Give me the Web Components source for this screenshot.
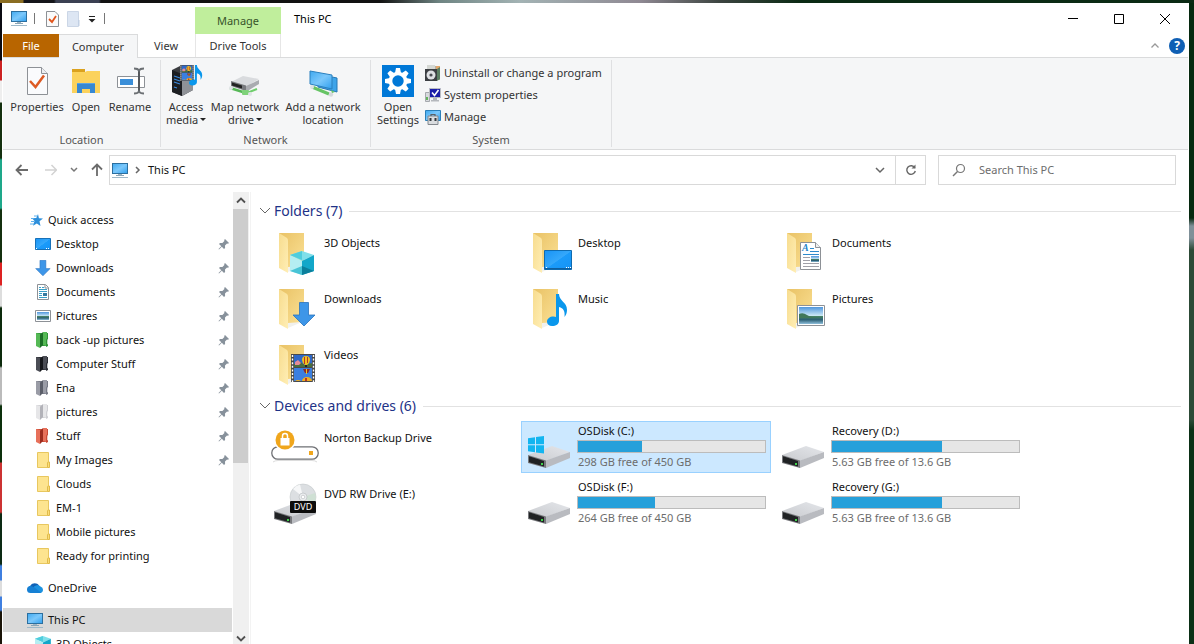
<!DOCTYPE html>
<html lang="en">
<head>
<meta charset="utf-8">
<title>This PC</title>
<style>
  html, body { height: 100%; }
  body {
    margin: 0;
    overflow: hidden;
    font: 11px/16px "Noto Sans", "Open Sans", sans-serif;
    color: #111;
  }
</style>
</head>
<body>
<pc-desktop>
  <explorer-window></explorer-window>
</pc-desktop>

<script>
/* ---------- icon drawings ---------- */
const GRADS = `
  <defs>
    <linearGradient id="scr" x1="0" y1="0" x2="1" y2="1"><stop offset="0" stop-color="#3fa9f0"/><stop offset=".5" stop-color="#7cc8fb"/><stop offset="1" stop-color="#2f9fee"/></linearGradient>
    <linearGradient id="desk" x1="0" y1="0" x2="1" y2="1"><stop offset="0" stop-color="#1793f5"/><stop offset=".5" stop-color="#35a8fb"/><stop offset=".52" stop-color="#1b9bfa"/><stop offset="1" stop-color="#1593f5"/></linearGradient>
    <linearGradient id="fb" x1="0" y1="0" x2="1" y2="1"><stop offset="0" stop-color="#e9c265"/><stop offset="1" stop-color="#fbe196"/></linearGradient>
    <linearGradient id="ff" x1="0" y1="0" x2="1" y2="1"><stop offset="0" stop-color="#f7dc8e"/><stop offset="1" stop-color="#ffeeb5"/></linearGradient>
    <linearGradient id="dt" x1="0" y1="1" x2="1" y2="0"><stop offset="0" stop-color="#c9cbcf"/><stop offset="1" stop-color="#e4e6ea"/></linearGradient>
    <linearGradient id="sky" x1="0" y1="0" x2="0" y2="1"><stop offset="0" stop-color="#4f96dd"/><stop offset=".5" stop-color="#c9e6f4"/><stop offset=".51" stop-color="#4d8a62"/><stop offset=".75" stop-color="#2c5f74"/><stop offset="1" stop-color="#8fc0dc"/></linearGradient>
    <linearGradient id="od" x1="0" y1="0" x2="1" y2="1"><stop offset="0" stop-color="#0f6cc4"/><stop offset="1" stop-color="#0f4f9e"/></linearGradient>
  </defs>`;

const monitor = `
  <rect x=".5" y=".5" width="15" height="10" fill="url(#scr)" stroke="#2c6f9f"/>
  <path d="M6 11h4v1.500H6z" fill="#9fb4c2"/><path d="M4 12h8v1H4z" fill="#8aa5b6"/>
  <path d="M0 14h16v1H0z" fill="#9fb9c9"/>`;

const arrowDown = (x, y, s) => `
  <path transform="translate(${x} ${y}) scale(${s})" d="M7.500.5h9v12.500h6.500L12 24 1 13h6.500z" fill="#3d96e8" stroke="#2b73bd" stroke-width=".8"/>`;

const cube = `
  <path d="M12 0l12 4-12 6L0 4z" fill="#7fdfea"/>
  <path d="M0 4l12 6v14L0 20z" fill="#b5eef2"/><path d="M24 4l-12 6v14l12-4z" fill="#12a7c9"/>
  <path d="M0 20l12-5v9z" fill="#48c4d6"/><path d="M24 20l-12-5v9z" fill="#0b7f9b"/>
  <path d="M12 0L0 4l12 5z" fill="#4fcddd"/>`;

const film = `
  <path d="M0 0h24v28H0z" fill="#4a4a4a"/>
  <path d="M3 1h18v12H3z" fill="#2f68c8"/><path d="M3 14h18v13H3z" fill="#3b7fe0"/>
  <path d="M3 10l6-2 5 3 7-2v4H3z" fill="#4a6e3c"/><path d="M4 8l3-2 3 3-2 2H4z" fill="#e58b98"/>
  <path d="M11 6a4 4 0 0 1 8 0q0 3-3 5h-2q-3-2-3-5z" fill="#efc21e"/>
  <path d="M13 3h1v7h-1zM16 3h1v6h-1z" fill="#b83428"/><path d="M14 11h2v2h-2z" fill="#222"/>
  <path d="M12 15h7l-2 4h-3z" fill="#8c2a28"/><path d="M15 15h1v5h-1z" fill="#efc21e"/>
  <path d="M11 27a5 4 0 0 1 10 0zM4 27a4 3 0 0 1 6 0z" fill="#efae22"/><path d="M14 24h2v3h-2z" fill="#b83428"/>
  <path d="M1.500 1v27M22.500 1v27" stroke="#fff" stroke-width="1.400" stroke-dasharray="2 1.600"/>`;

const note = `
  <path d="M12 0c0 7 8 8 8 16 0 3-1 5-2.500 7 .6-6-1-9-5.500-10v14c0 3-3 5-7 5-3 0-5-1.500-5-4.200C0 24.500 3 22.500 6.500 22.500c1 0 2 .2 2.500.5V0z" fill="#0a97ec"/>`;

const driveBody = `
  <path d="M3 32L27 23l18 6-24 9z" fill="url(#dt)"/>
  <path d="M21 37.500L45 29v6L21 45z" fill="#b9bbc0"/>
  <path d="M3 32l18 5.500V45L3 40z" fill="#77787c"/>
  <path d="M4 33.300l15 4.700v5.500L4 39.300z" fill="#202224"/>
  <path d="M16 40h2v2h-2z" fill="#3fd34a"/>`;

const folder48 = inner => `
  <path d="M8 5h25v33l-16 2z" fill="url(#fb)"/>
  <path d="M8 5l8 5q1 1 1 3v32L8 40z" fill="url(#ff)"/><path d="M17 39l14-1-14 6z" fill="#f1f1ee"/>
  ${inner}`;

const colourFolder = (a, b, c) => `
  <path d="M1 1h12v13H1z" fill="${b}"/>
  <path d="M1 1l4 1v14l-4-2z" fill="${a}"/>
  <path d="M5 3l3-3v13l-3 3z" fill="${c}"/><path d="M8 0h4v14l-4-1z" fill="${a}"/>
  <path d="M11 15V9q0-3 2-3v8z" fill="${b}"/><path d="M12 12V8.500q0-1.500 1-1.500v5.500z" fill="#fff" opacity=".7"/>`;

const plainFolder = `
  <path d="M2.500.5h11v15h-11z" fill="#fde48f" stroke="#e8c75f"/>
  <path d="M12.500 15V11q0-1 1-1h1v5.500h-2" fill="#fbdc78" stroke="#e0bb4b"/>`;

const ICONS = {
  pc: [16, 15, monitor],
  props: [24, 32, `<path d="M2.500 2.500h14l6 6v21h-20z" fill="#fafbfd" stroke="#8d9196"/><path d="M16.500 2.500v6h6" fill="#eceef1" stroke="#8d9196"/><path d="M5 16l5.500 6L19 10.500" fill="none" stroke="#dd5a23" stroke-width="2.500"/>`],
  propsSmall: [13, 16, `<path d="M.5.5h8.500l3.500 3.500v11.500H.5z" fill="#fafafa" stroke="#8d9196"/><path d="M3 8l3 3 4-6" fill="none" stroke="#e2541b" stroke-width="1.800"/>`],
  newFolder: [13, 16, `<path d="M.5.5h11v15H.5z" fill="#dde6f3" stroke="#cbd6e6"/><path d="M11 9h1.500v6H11z" fill="#c2d0e4"/>`],
  qat: [8, 8, `<path d="M1 1.500h6" stroke="#222"/><path d="M.5 4h7L4 7.500z" fill="#222"/>`],
  min: [10, 10, `<path d="M0 4.500h10" stroke="#000"/>`],
  max: [10, 10, `<path d="M.5.5h9v9h-9z" fill="none" stroke="#000"/>`],
  close: [10, 10, `<path d="M0 0l10 10M10 0L0 10" stroke="#000"/>`],
  caretUp: [8, 5, `<path d="M.5 4.500L4 1l3.500 3.500" fill="none" stroke="#999" stroke-width="1.300"/>`],
  open: [32, 32, `<path d="M2 4h13v6H2z" fill="#dba21f"/><path d="M2 7h13l2-1h13v22H2z" fill="#fbd25c"/><path d="M7 28V18h18v10h-5v-4h-8v4z" fill="#3788d2"/><path d="M7 18h18v1H7z" fill="#5ba4e4"/>`],
  rename: [32, 32, `<path d="M3.500 11.500h27v11h-27z" fill="#fff" stroke="#8d9196"/><path d="M6 14h13v6H6z" fill="#3b8fd9"/><path d="M25 4v24" stroke="#55585c" stroke-width="2"/><path d="M20 3.500q4 0 5 2 1-2 5-2M20 28.500q4 0 5-2 1 2 5 2" fill="none" stroke="#6c7074" stroke-width="1.800"/>`],
  media: [34, 32, `<path d="M3 5l8-4 13 4v20l-11 6-10-4z" fill="#3a3c40"/><path d="M13 9l11-4v20l-11 6z" fill="#8f9297"/><path d="M3 5l10 4v22L3 27z" fill="#1d1f23"/>
    <path d="M5 11l6 2M5 14l6 2M5 17l6 2M5 22l3 1" stroke="#3c8be0" stroke-width="1.200"/><g transform="translate(11 0) scale(.58 .56)">${film}</g><g transform="translate(20 0) scale(.66 .64)">${note}</g>`],
  mapDrive: [32, 32, `<path d="M2 17L14 11l16 3-13 8z" fill="#d9dbde"/><path d="M17 21l13-6v4l-13 8z" fill="#a9abb0"/><path d="M2 16l15 4.500V26L2 21z" fill="#77797d"/><path d="M3 17.500l10 3v3l-10-3z" fill="#222"/>
    <path d="M1 23l16 5" stroke="#57b857" stroke-width="2.500"/><path d="M14 27l4 1 10-4" fill="none" stroke="#6fce6c" stroke-width="2"/><rect x="13" y="25" width="7" height="5" rx="1" fill="#7fd27a"/><circle cx="2" cy="23" r="2" fill="#dfe3e6"/><circle cx="21" cy="29" r="2" fill="#e1e4e7"/>`],
  addLoc: [34, 32, `<path d="M12 9l19 4v14l-19-5z" fill="#3ea4e9" stroke="#2779b5"/><path d="M4 6l22 4v14L4 19z" fill="url(#scr)" stroke="#2b80be"/><path d="M6 22l17 7" stroke="#66c465" stroke-width="3"/><circle cx="6" cy="22" r="2" fill="#dfe3e6"/><circle cx="25" cy="29.500" r="2.200" fill="#d5d9dc"/><path d="M25 25l4 2-3 1z" fill="#66c465"/>`],
  gear: [32, 32, `<path d="M0 0h32v32H0z" fill="#0078d7"/><g fill="#fff"><path d="M14 3h4l1 5h-6zM14 29h4l1-5h-6zM3 14v4l5 1v-6zM29 14v4l-5 1v-6z"/><g transform="rotate(45 16 16)"><path d="M14 3h4l1 5h-6zM14 29h4l1-5h-6zM3 14v4l5 1v-6zM29 14v4l-5 1v-6z"/></g></g><circle cx="16" cy="16" r="7.500" fill="none" stroke="#fff" stroke-width="3.600"/>`],
  uninstall: [16, 16, `<path d="M2 1h13v14H2z" fill="#b5b0a2"/><path d="M11 1h4v13h-4z" fill="#e2a76c"/><path d="M2 0h8v4H2z" fill="#d5d8d4"/><path d="M0 4h12v12H0z" fill="#3c3f43"/><circle cx="6" cy="10" r="4.500" fill="#dfe1e4"/><circle cx="6" cy="10" r="1.600" fill="#4a4d52"/><path d="M12 4l3-2v12l-3 2z" fill="#5b7f63"/>`],
  sysprops: [16, 16, `<path d="M.5 5.500h4v9h-4z" fill="#d8dade" stroke="#a6a9ae"/><path d="M1 10h2v3H1z" fill="#64b45e"/><path d="M4.500 1.500h11v9h-11z" fill="#1c1ea8" stroke="#b8bbc2"/><path d="M7 5.500l2.500 3L13.500 3" fill="none" stroke="#fff" stroke-width="1.600"/><path d="M8 11h4v2h2v1.500H6V13h2z" fill="#b5b8bd"/>`],
  manage: [16, 16, `<path d="M.5 1.500h15v10H.5z" fill="url(#scr)" stroke="#2b7fb8"/><path d="M3 7h10v8.500H3z" fill="#d9dcdf" stroke="#83888e"/><path d="M6 7V5.500h4V7" fill="none" stroke="#5b6066" stroke-width="1.200"/><path d="M4.500 9h2v3h-2zM9.500 9h2v3h-2z" fill="#33373c"/>`],
  back: [14, 12, `<path d="M6.500 1L1.500 6l5 5M1.500 6H13" fill="none" stroke="#6b6b6b" stroke-width="1.800"/>`],
  fwd: [16, 12, `<path d="M10.500 1l5 5-5 5M15.500 6H4" fill="none" stroke="#d2d2d2" stroke-width="1.500"/>`],
  chevS: [10, 6, `<path d="M2 1l3 3 3-3" fill="none" stroke="#777" stroke-width="1.500"/>`],
  up: [12, 14, `<path d="M1 6.500l5-5 5 5M6 1.500V13" fill="none" stroke="#6b6b6b" stroke-width="1.800"/>`],
  crumb: [6, 8, `<path d="M1 1l3 3-3 3" fill="none" stroke="#666" stroke-width="1.500"/>`],
  chev: [10, 7, `<path d="M1 1l4 4 4-4" fill="none" stroke="#666" stroke-width="1.500"/>`],
  refresh: [12, 12, `<path d="M9.800 3.800A4.300 4.300 0 1 0 10.300 7" fill="none" stroke="#666" stroke-width="1.400"/><path d="M10.500.5v4H6.500z" fill="#666"/>`],
  search: [14, 14, `<circle cx="8.500" cy="5.500" r="4" fill="none" stroke="#777" stroke-width="1.200"/><path d="M5.500 8.500L1 13" stroke="#777" stroke-width="1.500"/>`],
  groupChev: [12, 8, `<path d="M1 1l5 5 5-5" fill="none" stroke="#666"/>`],
  sbUp: [10, 7, `<path d="M1 5.500l4-4 4 4" fill="none" stroke="#505050" stroke-width="1.800"/>`],
  sbDown: [10, 7, `<path d="M1 1.500l4 4 4-4" fill="none" stroke="#505050" stroke-width="1.800"/>`],
  pin: [12, 12, `<path d="M7 1l4 4-1 .8-1-.2-2 2 .1 2.300L6 11 3.800 8.700 1 11.500.5 11 3.300 8.200 1 6l1-1 2.400.1 2-2L6.200 2z" fill="#87919b"/>`],
  star: [16, 16, `<path d="M11 2l.9 4.200 4.100.2-3.500 2.800 1 4.800-3.700-2.600L6 13.700l1.500-4.600L5 6.200l4.300-.2z" fill="#2d8fdb"/><path d="M4 6.500h3M4 9.500h3M3 12h4M7 4h3" stroke="#5db1ee"/>`],
  desktop: [16, 16, `<path d="M.5 2.500h15v11H.5z" fill="url(#desk)" stroke="#1771b8"/><path d="M1 12h1v1H1zM11 12h1v1h-1zM13 12h1v1h-1z" fill="#fff"/>`],
  downloads: [16, 16, arrowDown(0, 0, .66)],
  documents: [16, 16, `<path d="M2.500.5h8l3 3v12h-11z" fill="#fff" stroke="#8d9196"/><path d="M10 1v3h3" fill="none" stroke="#8d9196"/><path d="M4 3.500h2M7 3.500h2M4 5.500h8M4 7.500h8M4 9.500h3M4 11.500h3M4 13.500h8" stroke="#3b9fc7"/><path d="M8 9h4v3H8z" fill="#35799f"/>`],
  pictures: [16, 16, `<path d="M.5 2.500h15v11H.5z" fill="#fff" stroke="#8d9196"/><path d="M2 4h12v8H2z" fill="url(#sky)"/>`],
  fGreen: [16, 16, colourFolder("#55b955", "#2f9438", "#1c6f27")],
  fBlack: [16, 16, colourFolder("#4b4d55", "#2b2d34", "#15161a")],
  fGrey: [16, 16, colourFolder("#9a9ca6", "#777a86", "#5b5e69")],
  fWhite: [16, 16, colourFolder("#e6e6e8", "#cfcfd3", "#b2b2b8")],
  fRed: [16, 16, colourFolder("#e7705a", "#c94a36", "#9d2c1e")],
  folder: [16, 16, plainFolder],
  onedrive: [16, 12, `<path d="M4 10a3.500 3.500 0 0 1-.5-6.500A5 5 0 0 1 12 3.500L8 8z" fill="url(#od)"/><path d="M7 4.500q4-3 6.500 0 2.500.8 2.500 3.200 0 3-3 3.300H4z" fill="#1c92e0"/><path d="M0 7.500Q0 4 3.500 4q2 0 4 1.500L14 10.500q-.6.5-1.500.5H3.500Q0 11 0 7.500z" fill="#1680d4"/>`],
  cube: [16, 16, `<g transform="scale(.66)">${cube}</g>`],
  t3d: [48, 48, folder48(`<g transform="translate(19 23)">${cube}</g>`)],
  tDesktop: [48, 48, folder48(`<path d="M19.500 22.500h27v19h-27z" fill="url(#desk)" stroke="#0f6bb0"/><path d="M20 40h27v1H20z" fill="#0f5f9f"/><path d="M21 39.500h1M41 39.500h1M43 39.500h1M45 39.500h1" stroke="#fff"/>`)],
  tDocs: [48, 48, folder48(`<path d="M21.500 14.500h15l5 5v22h-20z" fill="#fff" stroke="#8d9196"/><path d="M36.500 14.500v5h5" fill="#eee" stroke="#8d9196"/><text x="23" y="23" font-family="Liberation Serif, serif" font-style="italic" font-weight="bold" font-size="10" fill="#2483c9">A</text><path d="M31 20.500h4M31 23.500h9M24 26.500h16" stroke="#2e8bcd"/><path d="M24 29.500h7M24 32.500h7M24 35.500h16M24 38.500h16" stroke="#a0a0a8"/><path d="M32 28h8v6h-8z" fill="url(#sky)"/>`)],
  tDown: [48, 48, folder48(arrowDown(21, 18, 1))],
  tMusic: [48, 48, folder48(`<g transform="translate(22 10)">${note}</g>`)],
  tPics: [48, 48, folder48(`<path d="M18.500 21.500h27v20h-27z" fill="#fff" stroke="#8d9196"/><path d="M20 23h24v17H20z" fill="url(#sky)"/><path d="M20 30q4-2 8 1t16 3H20z" fill="#41785a"/>`)],
  tVideos: [48, 48, folder48(`<g transform="translate(20 14)">${film}</g>`)],
  norton: [48, 48, `<rect x=".8" y="23.800" width="46.400" height="12.400" rx="6" fill="#fff" stroke="#6e7074" stroke-width="1.300"/><circle cx="14" cy="17" r="11" fill="#fff"/><circle cx="14" cy="17" r="9.500" fill="#f0a61c"/><path d="M9.500 15h9v7.500h-9z" fill="#fff"/><path d="M11.500 15v-2a2.500 2.500 0 0 1 5 0v2" fill="none" stroke="#fff" stroke-width="1.500"/><path d="M38 28h4v4h-4z" fill="#f0a61c"/><path d="M2 39q2-1.500 5-1.500h34q3 0 5 1.500" fill="none" stroke="#dcdcdc"/>`],
  dvd: [48, 48, `<circle cx="32" cy="18" r="13" fill="#dcdfe2" stroke="#c3c7ca" stroke-width=".6"/><path d="M32 18L22 10a13 13 0 0 1 7-4.600z" fill="#f6f7f8"/><path d="M32 18l12-4a13 13 0 0 1-1 11z" fill="#cfe0d4"/><circle cx="32" cy="18" r="4" fill="#eceef0" stroke="#b3b7ba" stroke-width=".6"/><circle cx="32" cy="18" r="1.800" fill="#fff" stroke="#b3b7ba" stroke-width=".6"/>${driveBody}<rect x="19" y="22" width="26" height="12" rx="1" fill="#0c0c0c"/><text x="32" y="31" text-anchor="middle" font-family="Noto Sans, sans-serif" font-size="9" fill="#fff">DVD</text>`],
  drive: [48, 48, driveBody],
  winDrive: [48, 48, `${driveBody}<path d="M3 15.300l7-1v7H3zM11 14.100l8-1.100v8.300h-8zM3 22.300h7v7l-7-1zM11 22.300h8V30.500l-8-1.100z" fill="#13b5f0"/>`]
};

/* ---------- helpers ---------- */
function define(name, html, after) {
  const tpl = document.createElement("template");
  tpl.innerHTML = html;
  customElements.define(name, class extends HTMLElement {
    connectedCallback() {
      if (this.shadowRoot) return;
      this.attachShadow({ mode: "open" }).append(tpl.content.cloneNode(true));
      if (after) after(this, this.shadowRoot);
    }
  });
}

function makeIcon(host) {
  const icon = document.createElement("ui-icon");
  icon.setAttribute("name", host.getAttribute("icon"));
  return icon;
}

const RESET = `
  button { all: unset; box-sizing: border-box; cursor: default; }
  a { color: inherit; text-decoration: none; }
`;

/* ---------- elements ---------- */
define("ui-icon", `<style>:host { display: block; flex: none; } svg { display: block; }</style>`, (el, root) => {
  const [w, h, body] = ICONS[el.getAttribute("name")];
  const box = document.createElement("div");
  box.innerHTML = `<svg width="${w}" height="${h}" viewBox="0 0 ${w} ${h}" aria-hidden="true">${body.includes("url(#") ? GRADS : ""}${body}</svg>`;
  root.append(box.firstChild);
});

define("pc-desktop", `
<style>
  :host {
    display: flex;
    box-sizing: border-box;
    height: 100vh;
    padding: 3px 5px 0 2px;
    background:
      linear-gradient(90deg, #8a6d22 0 23px, #15151a 24px 54px, #3b4052 56px 99px, #121212 101px 380px, #6f8583 440px, #a3b3b4 520px, #8f8993 640px, #3c4440 720px, #0b2a14 800px) top / 100% 3px no-repeat,
      linear-gradient(#06290f 0 218px, #7f9098 226px 238px, #2c4a36 250px 420px, #0b3016 430px) right / 5px 100% no-repeat,
      linear-gradient(#0b0b12 0 60px, #c22 61px 80px, #eee 81px 102px, #14300f 103px 158px, #1ea88a 160px 208px, #14300f 210px 262px, #d22 263px 285px, #ddd 286px 306px, #0c2a0c 308px 366px, #bbb 368px 404px, #0c300c 406px 462px, #c33 463px 512px, #0c2a14 514px 564px, #3f7fe0 566px 580px, #ddd 581px 596px, #3f7fe0 597px 610px, #1a1408 612px) left / 2px 100% no-repeat,
      #0a1f10;
  }
  ::slotted(*) { flex: 1; min-width: 0; }
</style>
<slot></slot>`);

define("window-header", `
<style>
  ${RESET}
  :host { display: flex; box-sizing: border-box; border-bottom: 1px solid #dadbdc; height: 55px; background: #fff; color: #333; }
  .left { display: flex; flex-direction: column; width: 192px; flex: none; }
  .qat { display: flex; align-items: center; flex: none; height: 31px; padding-left: 8px; box-sizing: border-box; }
  .qat i { width: 1px; height: 11px; background: #777; margin: 0 11px 0 7px; }
  .qat button { display: block; }
  .qat button + button { margin-left: 8px; }
  .qat i:last-child { margin: 0 0 0 8px; }
  .tabs { display: flex; flex: 1; min-height: 0; }
  .tabs button { display: flex; justify-content: center; align-items: center; }
  .file { width: 56px; background: #b86500; color: #fff; }
  .tabs .on { width: 79px; height: 24px; border: 1px solid #dadbdc; border-width: 1px 1px 0 0; background: #f5f6f7; }
  .view { width: 56px; }
  .ctx { display: flex; flex-direction: column; box-sizing: border-box; width: 86px; flex: none; padding-top: 4px; }
  .ctx b { display: flex; justify-content: center; align-items: center; height: 27px; background: #c0ee9c; font-weight: 400; color: #37542a; }
  .ctx button { flex: 1; display: flex; justify-content: center; align-items: center; border: 1px solid #e6e6e6; border-width: 0 1px; }
  .title { flex: 1; padding: 8px 0 0 13px; color: #000; }
  h1 { margin: 0; font: inherit; }
  .right { display: flex; flex-direction: column; }
  .ctl { display: flex; height: 31px; }
  .ctl button { width: 46px; display: flex; justify-content: center; align-items: center; }
  .help { display: flex; justify-content: flex-end; align-items: center; flex: 1; gap: 10px; padding-right: 3px; }
  .help .q { width: 16px; height: 16px; border-radius: 8px; background: #0f5fb4; color: #fff; text-align: center; font-weight: 700; line-height: 16px; font-size: 12px; }
</style>
<div class="left">
  <div class="qat">
    <ui-icon name="pc"></ui-icon><i></i>
    <button aria-label="Properties"><ui-icon name="propsSmall"></ui-icon></button>
    <button aria-label="New folder"><ui-icon name="newFolder"></ui-icon></button>
    <button aria-label="Customize toolbar"><ui-icon name="qat"></ui-icon></button><i></i>
  </div>
  <div class="tabs"><button class="file">File</button><button class="on">Computer</button><button class="view">View</button></div>
</div>
<div class="ctx"><b>Manage</b><button>Drive Tools</button></div>
<div class="title"><h1>This PC</h1></div>
<div class="right">
  <div class="ctl">
    <button aria-label="Minimize"><ui-icon name="min"></ui-icon></button>
    <button aria-label="Maximize"><ui-icon name="max"></ui-icon></button>
    <button aria-label="Close"><ui-icon name="close"></ui-icon></button>
  </div>
  <div class="help"><button aria-label="Collapse ribbon"><ui-icon name="caretUp"></ui-icon></button><button class="q" aria-label="Help">?</button></div>
</div>`);

define("ribbon-group", `
<style>
  :host { display: flex; flex-direction: column; box-sizing: border-box; height: 87px; margin-top: 2px; border-right: 1px solid #dfe0e2; color: #555; }
  .row { display: flex; flex: 1; padding: 5px 0 0 var(--inset, 5px); color: #333; }
  .name { text-align: center; line-height: 14px; }
</style>
<div class="row"><slot></slot></div>
<div class="name"></div>`, (el, root) => { root.querySelector(".name").textContent = el.getAttribute("label"); });

define("ribbon-button", `
<style>
  ${RESET}
  :host { display: block; flex: none; }
  button { display: flex; flex-direction: column; align-items: center; gap: 3px; width: 100%; text-align: center; line-height: 13px; white-space: nowrap; }
</style>
<button><span><slot></slot></span></button>`, (el, root) => root.querySelector("button").prepend(makeIcon(el)));

define("ribbon-command", `
<style>
  ${RESET}
  :host { display: block; }
  button { display: flex; align-items: center; gap: 3px; height: 22px; white-space: nowrap; }
</style>
<button><span><slot></slot></span></button>`, (el, root) => root.querySelector("button").prepend(makeIcon(el)));

define("ribbon-bar", `
<style>
  :host { display: flex; height: 91px; background: #f5f6f7; border-bottom: 1px solid #dadbdc; }
  .loc { --inset: 7px; width: 158px; }
  .net { width: 210px; }
  .sys { width: 241px; }
  .w40 { width: 40px; } .w44 { width: 44px; } .w54 { width: 54px; } .w78 { width: 78px; }
  .list { display: flex; flex-direction: column; padding-left: 5px; margin-top: -3px; }
  .dd { display: inline-block; border: 3px solid transparent; border-top-color: #222; border-bottom-width: 0; margin-left: 2px; vertical-align: 3px; }
</style>
<ribbon-group class="loc" label="Location">
  <ribbon-button class="w54" icon="props">Properties</ribbon-button>
  <ribbon-button class="w44" icon="open">Open</ribbon-button>
  <ribbon-button class="w44" icon="rename">Rename</ribbon-button>
</ribbon-group>
<ribbon-group class="net" label="Network">
  <ribbon-button class="w40" icon="media">Access<br>media<i class="dd"></i></ribbon-button>
  <ribbon-button class="w78" icon="mapDrive">Map network<br>drive<i class="dd"></i></ribbon-button>
  <ribbon-button class="w78" icon="addLoc">Add a network<br>location</ribbon-button>
</ribbon-group>
<ribbon-group class="sys" label="System">
  <ribbon-button class="w44" icon="gear">Open<br>Settings</ribbon-button>
  <div class="list">
    <ribbon-command icon="uninstall">Uninstall or change a program</ribbon-command>
    <ribbon-command icon="sysprops">System properties</ribbon-command>
    <ribbon-command icon="manage">Manage</ribbon-command>
  </div>
</ribbon-group>`);

define("address-row", `
<style>
  ${RESET}
  :host { display: flex; align-items: center; box-sizing: border-box; height: 42px; padding: 5px 12px 7px; background: #fff; }
  .nav { display: flex; align-items: center; gap: 12px; width: 94px; flex: none; }
  .bar { flex: 1; display: flex; box-sizing: border-box; height: 30px; border: 1px solid #d9d9d9; min-width: 0; }
  .crumbs { flex: 1; display: flex; align-items: center; padding-left: 2px; gap: 7px; }
  .bar > button { display: flex; align-items: center; justify-content: center; width: 30px; }
  .bar > button:last-child { border-left: 1px solid #d9d9d9; }
  label { display: flex; align-items: center; box-sizing: border-box; width: 238px; height: 30px; margin-left: 12px; border: 1px solid #d9d9d9; padding-left: 13px; gap: 13px; flex: none; }
  input { all: unset; flex: 1; min-width: 0; }
  input::placeholder { color: #6d6d6d; opacity: 1; }
</style>
<div class="nav">
  <button aria-label="Back"><ui-icon name="back"></ui-icon></button>
  <button aria-label="Forward"><ui-icon name="fwd"></ui-icon></button>
  <button aria-label="Recent locations"><ui-icon name="chevS"></ui-icon></button>
  <button aria-label="Up"><ui-icon name="up"></ui-icon></button>
</div>
<div class="bar">
  <div class="crumbs"><ui-icon name="pc"></ui-icon><ui-icon name="crumb"></ui-icon><button>This PC</button></div>
  <button aria-label="Previous locations"><ui-icon name="chev"></ui-icon></button>
  <button aria-label="Refresh"><ui-icon name="refresh"></ui-icon></button>
</div>
<label><ui-icon name="search"></ui-icon><input type="text" aria-label="Search This PC" placeholder="Search This PC"></label>`);

define("tree-item", `
<style>
  ${RESET}
  :host { display: block; }
  :host([gap]) { margin-top: 8px; }
  a { display: flex; align-items: center; box-sizing: border-box; height: 24px; padding: 0 2px 0 32px; gap: 5px; white-space: nowrap; }
  :host([root]) a { padding-left: 24px; }
  :host([on]) a { background: #d9d9d9; }
  span { flex: 1; }
</style>
<a href="#"><span><slot></slot></span></a>`, (el, root) => {
  const link = root.querySelector("a");
  link.prepend(makeIcon(el));
  if (el.hasAttribute("pinned")) {
    const pin = document.createElement("ui-icon");
    pin.setAttribute("name", "pin");
    link.append(pin);
  }
});

define("nav-pane", `
<style>
  ${RESET}
  :host { display: flex; width: 248px; flex: none; overflow: hidden; border-right: 1px solid #f3f3f3; box-sizing: border-box; }
  nav { flex: 1; padding-top: 16px; overflow: hidden; min-width: 0; }
  .sb { display: flex; flex-direction: column; width: 16px; margin-left: 1px; margin-right: 1px; background: #f0f0f0; }
  .sb button { display: flex; align-items: center; justify-content: center; height: 17px; flex: none; }
  .sb button:last-child { height: 11px; }
  .thumb { flex: 60; background: #cdcdcd; margin-right: 1px; }
  .rest { flex: 40; }
</style>
<nav aria-label="Folders">
  <tree-item root icon="star">Quick access</tree-item>
  <tree-item pinned icon="desktop">Desktop</tree-item>
  <tree-item pinned icon="downloads">Downloads</tree-item>
  <tree-item pinned icon="documents">Documents</tree-item>
  <tree-item pinned icon="pictures">Pictures</tree-item>
  <tree-item pinned icon="fGreen">back -up pictures</tree-item>
  <tree-item pinned icon="fBlack">Computer Stuff</tree-item>
  <tree-item pinned icon="fGrey">Ena</tree-item>
  <tree-item pinned icon="fWhite">pictures</tree-item>
  <tree-item pinned icon="fRed">Stuff</tree-item>
  <tree-item pinned icon="folder">My Images</tree-item>
  <tree-item icon="folder">Clouds</tree-item>
  <tree-item icon="folder">EM-1</tree-item>
  <tree-item icon="folder">Mobile pictures</tree-item>
  <tree-item icon="folder">Ready for printing</tree-item>
  <tree-item root gap icon="onedrive">OneDrive</tree-item>
  <tree-item root gap on icon="pc">This PC</tree-item>
  <tree-item icon="cube">3D Objects</tree-item>
</nav>
<div class="sb">
  <button aria-label="Scroll up"><ui-icon name="sbUp"></ui-icon></button>
  <div class="thumb"></div><div class="rest"></div>
  <button aria-label="Scroll down"><ui-icon name="sbDown"></ui-icon></button>
</div>`);

define("item-group", `
<style>
  ${RESET}
  :host { display: block; }
  .head { display: flex; align-items: center; height: 22px; gap: 3px; padding-left: 8px; }
  h2 { margin: 0 4px 0 0; font-size: 14px; line-height: 22px; font-weight: 400; color: #1e3287; white-space: nowrap; }
  .line { flex: 1; height: 1px; background: #e2e2e2; }
  .grid { display: grid; grid-template-columns: repeat(auto-fill, 250px); gap: 4px; padding: 4px 0 0 16px; }
</style>
<div class="head"><button aria-label="Collapse"><ui-icon name="groupChev"></ui-icon></button><h2></h2><div class="line"></div></div>
<div class="grid"><slot></slot></div>`, (el, root) => { root.querySelector("h2").textContent = el.getAttribute("label"); });

define("item-tile", `
<style>
  ${RESET}
  :host { display: block; }
  a { display: flex; box-sizing: border-box; height: 52px; padding: 2px 4px; gap: 4px; }
  :host([on]) a { background: #cce8ff; box-shadow: inset 0 0 0 1px #99d1ff; }
  .text { flex: 1; padding: 7px 0 0 1px; }
  :host([value]) .text { padding: 0; }
  :host([value]) .name, .free { padding-left: 1px; }
  .free { color: #6d6d6d; }
  progress { display: block; appearance: none; width: 189px; height: 13px; border: 1px solid #bcbcbc; box-sizing: border-box; background: #e6e6e6; margin: 1px 0; }
  progress::-webkit-progress-bar { background: #e6e6e6; }
  progress::-webkit-progress-value { background: #26a0da; }
</style>
<a href="#"><div class="text"><div class="name"><slot></slot></div></div></a>`, (el, root) => {
  root.querySelector("a").prepend(makeIcon(el));
  if (el.hasAttribute("value")) {
    const bar = document.createElement("progress");
    bar.max = 100;
    bar.value = Number(el.getAttribute("value"));
    bar.setAttribute("aria-label", "Space used");
    const free = document.createElement("div");
    free.className = "free";
    free.textContent = el.getAttribute("free");
    root.querySelector(".text").append(bar, free);
  }
});

define("explorer-window", `
<style>
  :host { display: flex; flex-direction: column; background: #fff; border: 1px solid #fff; border-width: 0 1px; overflow: hidden; }
  .body { display: flex; flex: 1; min-height: 0; }
  main { flex: 1; padding: 8px 7px 0 0; min-width: 0; display: flex; flex-direction: column; gap: 5px; }
</style>
<window-header></window-header>
<ribbon-bar></ribbon-bar>
<address-row></address-row>
<div class="body">
  <nav-pane></nav-pane>
  <main>
    <item-group label="Folders (7)">
      <item-tile icon="t3d">3D Objects</item-tile>
      <item-tile icon="tDesktop">Desktop</item-tile>
      <item-tile icon="tDocs">Documents</item-tile>
      <item-tile icon="tDown">Downloads</item-tile>
      <item-tile icon="tMusic">Music</item-tile>
      <item-tile icon="tPics">Pictures</item-tile>
      <item-tile icon="tVideos">Videos</item-tile>
    </item-group>
    <item-group label="Devices and drives (6)">
      <item-tile icon="norton">Norton Backup Drive</item-tile>
      <item-tile on icon="winDrive" value="34" free="298 GB free of 450 GB">OSDisk (C:)</item-tile>
      <item-tile icon="drive" value="59" free="5.63 GB free of 13.6 GB">Recovery (D:)</item-tile>
      <item-tile icon="dvd">DVD RW Drive (E:)</item-tile>
      <item-tile icon="drive" value="41" free="264 GB free of 450 GB">OSDisk (F:)</item-tile>
      <item-tile icon="drive" value="59" free="5.63 GB free of 13.6 GB">Recovery (G:)</item-tile>
    </item-group>
  </main>
</div>`);
</script>
</body>
</html>
